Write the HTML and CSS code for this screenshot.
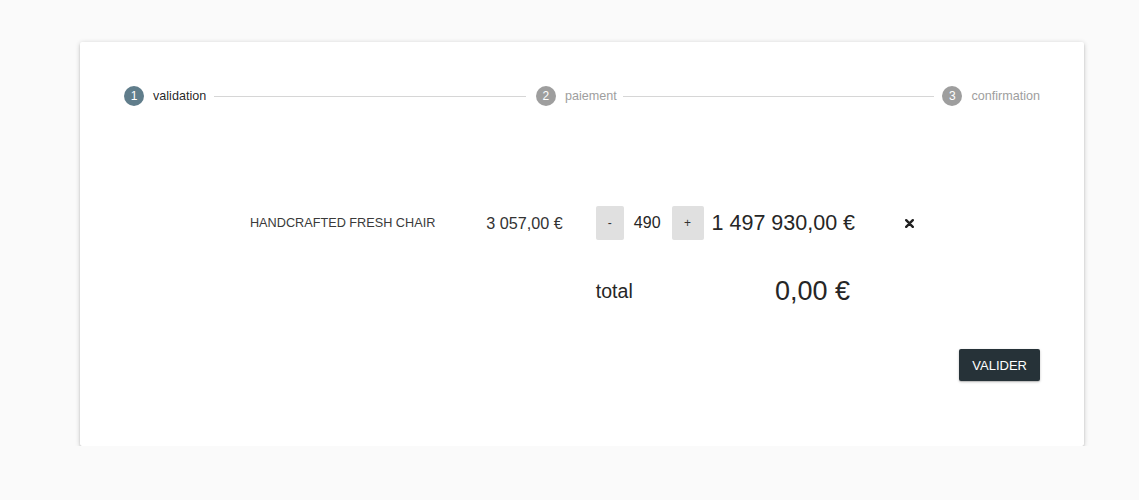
FILE: index.html
```html
<!DOCTYPE html>
<html lang="fr">
<head>
<meta charset="utf-8">
<title>Panier</title>
<link rel="stylesheet" href="styles.css">
</head>
<body>
<div class="card">
  <div class="stepper">
    <div class="step active"><span class="step-icon">1</span><span class="step-label">validation</span></div>
    <div class="connector connector-a"></div>
    <div class="step"><span class="step-icon">2</span><span class="step-label">paiement</span></div>
    <div class="connector connector-b"></div>
    <div class="step"><span class="step-icon">3</span><span class="step-label">confirmation</span></div>
  </div>

  <div class="cart">
    <div class="cell name">HANDCRAFTED FRESH CHAIR</div>
    <div class="cell price">3 057,00 €</div>
    <div class="cell qty">
      <button class="qty-btn minus">-</button>
      <span class="qty-value">490</span>
      <button class="qty-btn plus">+</button>
    </div>
    <div class="cell line-total">1 497 930,00 €</div>
    <div class="cell remove">
      <svg width="9" height="9" viewBox="0 0 9 9"><path d="M1.2 1.2 L7.8 7.8 M7.8 1.2 L1.2 7.8" stroke="#212121" stroke-width="2.4" stroke-linecap="round"/></svg>
    </div>

    <div class="cell empty"></div>
    <div class="cell empty"></div>
    <div class="cell total-label">total</div>
    <div class="cell total-value">0,00 €</div>
    <div class="cell empty"></div>
  </div>

  <div class="actions">
    <button class="validate">VALIDER</button>
  </div>
</div>
</body>
</html>
```

FILE: styles.css
```css
html, body {
  margin: 0;
  padding: 0;
  background: #fafafa;
  font-family: "Liberation Sans", Arial, sans-serif;
  color: rgba(0, 0, 0, 0.87);
}

.card {
  margin: 42px 0 0 80px;
  width: 1004px;
  box-sizing: border-box;
  padding: 20px;
  background: #fff;
  border-radius: 2px;
  box-shadow: 0 1px 5px rgba(0,0,0,0.2), 0 2px 2px rgba(0,0,0,0.14), 0 3px 1px -2px rgba(0,0,0,0.12);
}

.stepper {
  display: flex;
  align-items: center;
  padding: 24px;
  height: 20px;
}

.step {
  display: flex;
  align-items: center;
}

.step-icon {
  width: 20px;
  height: 20px;
  border-radius: 50%;
  background: #9e9e9e;
  color: #fff;
  font-size: 12px;
  line-height: 20px;
  text-align: center;
}

.step.active .step-icon {
  background: #607d8b;
}

.step-label {
  margin-left: 9px;
  font-size: 12.6px;
  color: #9e9e9e;
}

.step.active .step-label {
  color: rgba(0, 0, 0, 0.87);
}

.connector {
  flex: 1;
  border-top: 1px solid #d6d6d6;
  margin: 0 10px 0 8px;
}

.connector-b {
  margin: 0 8px 0 6px;
}

.cart {
  display: grid;
  grid-template-columns: auto auto auto auto auto;
  justify-content: center;
  align-items: center;
  margin-top: 76px;
  row-gap: 31px;
}

.cell {
  height: 34px;
  display: flex;
  align-items: center;
}

.name {
  font-size: 12.7px;
  color: #3a3a3a;
}

.price {
  padding-left: 51px;
  font-size: 16.2px;
  color: #333;
}

.qty {
  padding-left: 33px;
}

.qty-btn {
  height: 34px;
  border: none;
  border-radius: 2px;
  background: #e0e0e0;
  color: #333;
  font-family: inherit;
  font-size: 12px;
  padding: 0 12px;
  cursor: pointer;
}

.minus {
  width: 28px;
  padding: 0;
}

.plus {
  width: 32px;
  padding: 0;
}

.qty-value {
  font-size: 16px;
  margin: 0 11px 0 10px;
  color: #262626;
}

.line-total {
  padding-left: 8px;
  font-size: 21.5px;
  color: #262626;
}

.remove {
  padding-left: 50px;
}

.total-label {
  padding-left: 33px;
  font-size: 19.5px;
  color: #262626;
  height: 40px;
}

.total-value {
  justify-self: end;
  margin-right: 5px;
  font-size: 27px;
  color: #262626;
  height: 40px;
}

.actions {
  display: flex;
  justify-content: flex-end;
  padding: 0 24px;
  margin-top: 38px;
  margin-bottom: 45px;
}

.validate {
  height: 32px;
  padding: 0 13px;
  border: none;
  border-radius: 2px;
  background: #263238;
  color: #fff;
  font-family: inherit;
  font-size: 13px;
  box-shadow: 0 1px 3px rgba(0,0,0,0.2), 0 1px 1px rgba(0,0,0,0.14);
  cursor: pointer;
}
```
